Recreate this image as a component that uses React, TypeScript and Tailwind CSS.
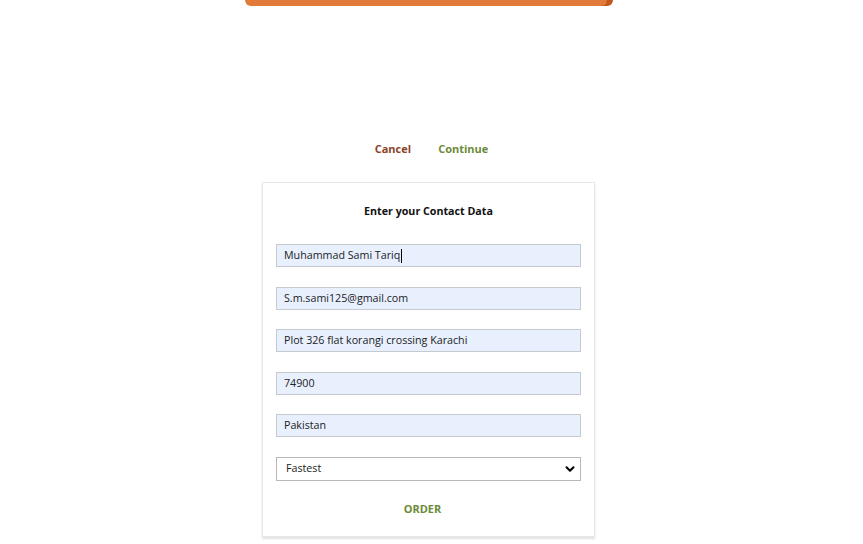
import { ChevronDown } from "lucide-react";

const fields = [
  "Muhammad Sami Tariq",
  "S.m.sami125@gmail.com",
  "Plot 326 flat korangi crossing Karachi",
  "74900",
  "Pakistan",
];

export default function App() {
  return (
    <div
      className="w-[863px] h-[544px] bg-white overflow-hidden text-[#222]"
      style={{ fontFamily: '"Open Sans", "Liberation Sans", sans-serif' }}
    >
      {/* top banner button edge */}
      <div className="flex justify-center pr-[12px]">
        <div className="w-[362px] h-[6px] bg-[#e27b3a] rounded-b-[14px] shadow-[6px_0_0_#c4561a]" />
      </div>

      {/* nav actions */}
      <div className="flex justify-center gap-[27px] mt-[135px] text-[11px] font-bold leading-[16px]">
        <span className="text-[#8a4326]">Cancel</span>
        <span className="text-[#6b8a38]">Continue</span>
      </div>

      {/* form card */}
      <div className="flex justify-center pr-[6px] mt-[25px]">
        <div className="w-[333px] h-[355px] border border-[#e8e8e8] shadow-[0_2px_2px_rgba(0,0,0,0.12)] bg-white px-[13px] pt-[20px]">
          <div className="text-center text-[10.7px] font-bold leading-[16px] text-[#111]">
            Enter your Contact Data
          </div>
          <div className="flex flex-col gap-[19.5px] mt-[25px]">
            {fields.map((value, i) => (
              <div
                key={value}
                className="h-[23px] border border-[#c6c9ce] bg-[#e8f0fe] flex items-center px-[7px] text-[10.7px] text-[#222]"
              >
                {value}
                {i === 0 && <span className="w-px h-[14px] bg-black ml-px" />}
              </div>
            ))}
            <div className="h-[24px] border border-[#b8b8b8] bg-white flex items-center justify-between px-[9px] pr-[3px] text-[10.7px] text-[#222]">
              <span>Fastest</span>
              <ChevronDown className="w-[14px] h-[14px] text-black" strokeWidth={3.5} />
            </div>
          </div>
          <div className="text-center mt-[20px] text-[11px] font-bold leading-[16px] text-[#6b8a38] pr-[12px]">
            ORDER
          </div>
        </div>
      </div>
    </div>
  );
}
